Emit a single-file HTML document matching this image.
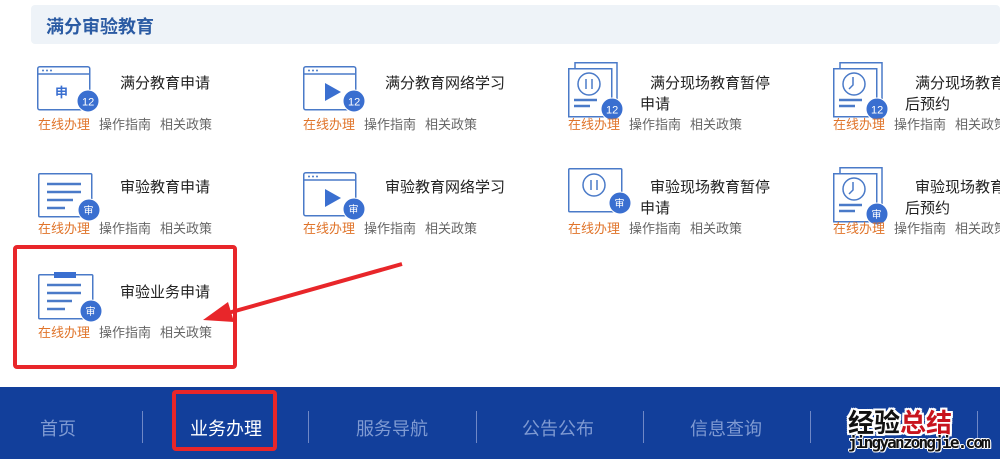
<!DOCTYPE html>
<html><head><meta charset="utf-8"><style>
*{margin:0;padding:0;box-sizing:border-box}
body{width:1000px;height:459px;overflow:hidden;background:#fff;position:relative;font-family:"Liberation Sans","Noto Sans CJK SC",sans-serif}
.abs{position:absolute;white-space:nowrap}
.hdr{left:31px;top:5px;width:969px;height:39px;background:#eef3f8;border-radius:4px}
.ht{left:46px;top:13px;font-size:18px;font-weight:bold;color:#2b5ba3}
.t{font-size:15px;color:#222}
.l{font-size:13px;color:#666}
.l span{margin-right:9px}
.l .o{color:#e0742a}
svg.i{position:absolute;overflow:visible}
.nav{left:0;top:387px;width:1000px;height:72px;background:#123f9b}
.n{top:415px;font-size:18px;color:#7f9ad2}
.sep{top:411px;width:1px;height:32px;background:#6f88c6}
</style></head><body>
<div class="abs hdr"></div>
<div class="abs ht">满分审验教育</div>

<svg class="i" style="left:37px;top:66px" width="60" height="50" fill="none" stroke="#4a7ac8" stroke-width="1.5">
<rect x="0.75" y="0.75" width="52" height="43" rx="2"/><line x1="1" y1="8" x2="53" y2="8"/>
<g fill="#4a7ac8" stroke="none"><circle cx="6" cy="4.5" r="1"/><circle cx="10" cy="4.5" r="1"/><circle cx="14" cy="4.5" r="1"/></g>
<text x="18" y="31" font-size="13" font-weight="bold" fill="#3a6fd0" stroke="none" font-family="Noto Sans CJK SC">申</text>
<circle cx="51" cy="35" r="11" fill="#3a6fd0" stroke="#fff" stroke-width="1"/><text x="45" y="39.5" font-size="11" fill="#fff" stroke="none">12</text></svg>
<svg class="i" style="left:303px;top:66px" width="60" height="50" fill="none" stroke="#4a7ac8" stroke-width="1.5">
<rect x="0.75" y="0.75" width="52" height="43" rx="2"/><line x1="1" y1="8" x2="53" y2="8"/>
<g fill="#4a7ac8" stroke="none"><circle cx="6" cy="4.5" r="1"/><circle cx="10" cy="4.5" r="1"/><circle cx="14" cy="4.5" r="1"/><path d="M22 17 L38 26 L22 35Z" fill="#3a6fd0"/></g>
<circle cx="51" cy="35" r="11" fill="#3a6fd0" stroke="#fff" stroke-width="1"/><text x="45" y="39.5" font-size="11" fill="#fff" stroke="none">12</text></svg>
<svg class="i" style="left:568px;top:62px" width="60" height="60" fill="none" stroke="#4a7ac8" stroke-width="1.5">
<rect x="7" y="0.75" width="42" height="46" fill="#fff"/><rect x="0.75" y="6.75" width="43" height="48" fill="#fff"/>
<circle cx="21" cy="22" r="11"/><line x1="18" y1="17" x2="18" y2="27"/><line x1="24" y1="17" x2="24" y2="27"/>
<line x1="6" y1="38" x2="29" y2="38" stroke-width="2.5"/><line x1="6" y1="44" x2="22" y2="44" stroke-width="2.5"/>
<circle cx="44" cy="47" r="11" fill="#3a6fd0" stroke="#fff" stroke-width="1"/><text x="38" y="51.5" font-size="11" fill="#fff" stroke="none">12</text></svg>
<svg class="i" style="left:833px;top:62px" width="60" height="60" fill="none" stroke="#4a7ac8" stroke-width="1.5">
<rect x="7" y="0.75" width="42" height="46" fill="#fff"/><rect x="0.75" y="6.75" width="43" height="48" fill="#fff"/>
<circle cx="21" cy="22" r="11"/><path d="M20 15 V23 L16 27"/>
<line x1="6" y1="38" x2="29" y2="38" stroke-width="2.5"/><line x1="6" y1="44" x2="22" y2="44" stroke-width="2.5"/>
<circle cx="44" cy="47" r="11" fill="#3a6fd0" stroke="#fff" stroke-width="1"/><text x="38" y="51.5" font-size="11" fill="#fff" stroke="none">12</text></svg>

<svg class="i" style="left:38px;top:173px" width="60" height="50" fill="none" stroke="#4a7ac8" stroke-width="1.5">
<rect x="0.75" y="0.75" width="53" height="43" rx="1"/>
<g stroke-width="2.5"><line x1="9" y1="11" x2="43" y2="11"/><line x1="9" y1="19" x2="43" y2="19"/><line x1="9" y1="27" x2="35" y2="27"/><line x1="9" y1="35" x2="27" y2="35"/></g>
<circle cx="51" cy="37" r="11" fill="#3a6fd0" stroke="#fff" stroke-width="1"/><text x="45.5" y="41" font-size="10" fill="#fff" stroke="none" font-family="Noto Sans CJK SC">审</text></svg>
<svg class="i" style="left:303px;top:172px" width="60" height="50" fill="none" stroke="#4a7ac8" stroke-width="1.5">
<rect x="0.75" y="0.75" width="52" height="43" rx="2"/><line x1="1" y1="8" x2="53" y2="8"/>
<g fill="#4a7ac8" stroke="none"><circle cx="6" cy="4.5" r="1"/><circle cx="10" cy="4.5" r="1"/><circle cx="14" cy="4.5" r="1"/><path d="M22 17 L38 26 L22 35Z" fill="#3a6fd0"/></g>
<circle cx="51" cy="37" r="11" fill="#3a6fd0" stroke="#fff" stroke-width="1"/><text x="45.5" y="41" font-size="10" fill="#fff" stroke="none" font-family="Noto Sans CJK SC">审</text></svg>
<svg class="i" style="left:568px;top:168px" width="60" height="50" fill="none" stroke="#4a7ac8" stroke-width="1.5">
<rect x="0.75" y="0.75" width="53" height="43" rx="1"/>
<circle cx="26" cy="17" r="11"/><line x1="23" y1="12" x2="23" y2="22"/><line x1="29" y1="12" x2="29" y2="22"/>
<circle cx="52" cy="35" r="11" fill="#3a6fd0" stroke="#fff" stroke-width="1"/><text x="46.5" y="39" font-size="10" fill="#fff" stroke="none" font-family="Noto Sans CJK SC">审</text></svg>
<svg class="i" style="left:833px;top:167px" width="60" height="60" fill="none" stroke="#4a7ac8" stroke-width="1.5">
<rect x="7" y="0.75" width="42" height="46" fill="#fff"/><rect x="0.75" y="6.75" width="43" height="48" fill="#fff"/>
<circle cx="21" cy="22" r="11"/><path d="M20 15 V23 L16 27"/>
<line x1="6" y1="38" x2="29" y2="38" stroke-width="2.5"/><line x1="6" y1="44" x2="22" y2="44" stroke-width="2.5"/>
<circle cx="44" cy="47" r="11" fill="#3a6fd0" stroke="#fff" stroke-width="1"/><text x="38.5" y="51" font-size="10" fill="#fff" stroke="none" font-family="Noto Sans CJK SC">审</text></svg>

<svg class="i" style="left:38px;top:272px" width="60" height="55" fill="none" stroke="#4a7ac8" stroke-width="1.5">
<rect x="0.75" y="2.75" width="54" height="44" rx="1"/><rect x="16" y="0" width="22" height="6" fill="#3a6fd0" stroke="none"/>
<g stroke-width="2.5"><line x1="9" y1="13" x2="43" y2="13"/><line x1="9" y1="21" x2="43" y2="21"/><line x1="9" y1="29" x2="34" y2="29"/><line x1="9" y1="37" x2="27" y2="37"/></g>
<circle cx="53" cy="39" r="11" fill="#3a6fd0" stroke="#fff" stroke-width="1"/><text x="47.5" y="43" font-size="10" fill="#fff" stroke="none" font-family="Noto Sans CJK SC">审</text></svg>

<div class="abs t" style="left:120px;top:72px">满分教育申请</div>
<div class="abs t" style="left:385px;top:72px">满分教育网络学习</div>
<div class="abs t" style="left:650px;top:72px">满分现场教育暂停</div>
<div class="abs t" style="left:640px;top:93px">申请</div>
<div class="abs t" style="left:915px;top:72px">满分现场教育暂停</div>
<div class="abs t" style="left:905px;top:93px">后预约</div>
<div class="abs t" style="left:120px;top:176px">审验教育申请</div>
<div class="abs t" style="left:385px;top:176px">审验教育网络学习</div>
<div class="abs t" style="left:650px;top:176px">审验现场教育暂停</div>
<div class="abs t" style="left:640px;top:197px">申请</div>
<div class="abs t" style="left:915px;top:176px">审验现场教育暂停</div>
<div class="abs t" style="left:905px;top:197px">后预约</div>
<div class="abs t" style="left:120px;top:281px">审验业务申请</div>

<div class="abs l" style="left:38px;top:114px"><span class="o">在线办理</span><span>操作指南</span><span>相关政策</span></div>
<div class="abs l" style="left:303px;top:114px"><span class="o">在线办理</span><span>操作指南</span><span>相关政策</span></div>
<div class="abs l" style="left:568px;top:114px"><span class="o">在线办理</span><span>操作指南</span><span>相关政策</span></div>
<div class="abs l" style="left:833px;top:114px"><span class="o">在线办理</span><span>操作指南</span><span>相关政策</span></div>
<div class="abs l" style="left:38px;top:218px"><span class="o">在线办理</span><span>操作指南</span><span>相关政策</span></div>
<div class="abs l" style="left:303px;top:218px"><span class="o">在线办理</span><span>操作指南</span><span>相关政策</span></div>
<div class="abs l" style="left:568px;top:218px"><span class="o">在线办理</span><span>操作指南</span><span>相关政策</span></div>
<div class="abs l" style="left:833px;top:218px"><span class="o">在线办理</span><span>操作指南</span><span>相关政策</span></div>
<div class="abs l" style="left:38px;top:322px"><span class="o">在线办理</span><span>操作指南</span><span>相关政策</span></div>

<div class="abs" style="left:13px;top:245px;width:224px;height:124px;border:4px solid #e8262a;border-radius:4px"></div>
<svg class="i" style="left:0;top:0" width="1000" height="459">
<line x1="402" y1="264" x2="228" y2="313" stroke="#e8262a" stroke-width="4"/>
<path d="M203 320 L228 302 L234 322Z" fill="#e8262a"/></svg>

<div class="abs nav"></div>
<div class="abs n" style="left:40px">首页</div>
<div class="abs n" style="left:190px;color:#fff">业务办理</div>
<div class="abs n" style="left:356px">服务导航</div>
<div class="abs n" style="left:522px">公告公布</div>
<div class="abs n" style="left:690px">信息查询</div>
<div class="abs n" style="left:858px">APP</div>
<div class="abs sep" style="left:142px"></div>
<div class="abs sep" style="left:308px"></div>
<div class="abs sep" style="left:476px"></div>
<div class="abs sep" style="left:643px"></div>
<div class="abs sep" style="left:810px"></div>
<div class="abs sep" style="left:977px"></div>
<div class="abs" style="left:172px;top:390px;width:105px;height:61px;border:4px solid #e8262a;border-radius:4px"></div>

<div class="abs" style="left:848px;top:403px;font-size:26px;font-weight:bold;color:#111;text-shadow:2px 0 #fff,-2px 0 #fff,0 2px #fff,0 -2px #fff,2px 2px #fff,-2px -2px #fff,2px -2px #fff,-2px 2px #fff">经验<span style="color:#c8141e">总结</span></div>
<div class="abs" style="left:848px;top:433px;font-size:16px;font-weight:bold;color:#111;font-family:'DejaVu Sans Mono',monospace;letter-spacing:-1.8px;text-shadow:1px 0 #fff,-1px 0 #fff,0 1px #fff,0 -1px #fff,1px 1px #fff,-1px -1px #fff">jingyanzongjie.com</div>
</body></html>
